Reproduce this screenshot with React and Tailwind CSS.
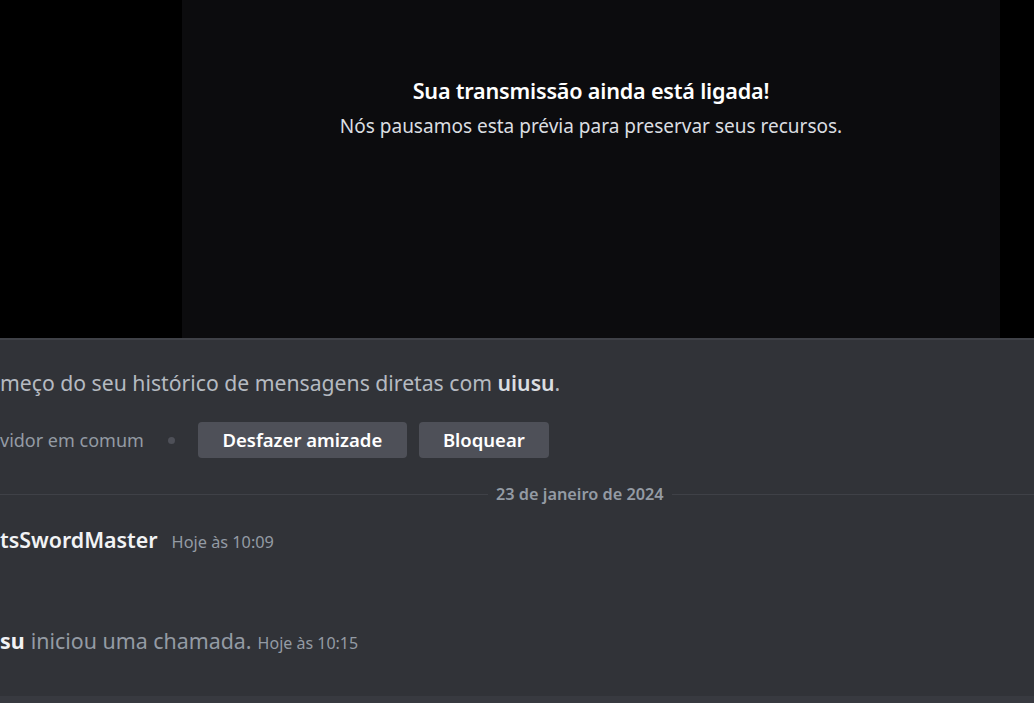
import React from 'react';

const font = { fontFamily: '"Noto Sans", "Liberation Sans", sans-serif' };

const StreamPreview = () => (
    <div className="h-[338px] bg-black flex justify-center">
        <div className="ml-[182px] mr-[34px] flex-1 bg-[#0c0c0e] flex flex-col items-center pt-[76px]">
            <h2 className="text-[21.6px] font-semibold text-white leading-[30px] tracking-[-0.2px] whitespace-nowrap">Sua transmissão ainda está ligada!</h2>
            <p className="text-[19px] text-[#dbdee1] leading-[26px] mt-[7px] whitespace-nowrap">Nós pausamos esta prévia para preservar seus recursos.</p>
        </div>
    </div>
);

const Chat = () => (
    <div className="flex-1 bg-[#313338] border-t-2 border-[#3f4147] flex flex-col overflow-hidden">
        {/* Intro */}
        <p className="mt-[29px] text-[21.2px] leading-[28px] text-[#b5bac1] whitespace-nowrap">
            meço do seu histórico de mensagens diretas com <span className="font-semibold text-[#dbdee1]">uiusu</span>.
        </p>
        <div className="mt-[25px] flex items-center h-9">
            <span className="text-[18px] text-[#949ba4] whitespace-nowrap">vidor em comum</span>
            <span className="ml-[24px] w-[7px] h-[7px] rounded-full bg-[#4e5058]" />
            <button className="ml-[23px] h-9 w-[209px] rounded-[4px] bg-[#4e5058] text-white text-[18.5px] font-semibold">Desfazer amizade</button>
            <button className="ml-[12px] h-9 w-[130px] rounded-[4px] bg-[#4e5058] text-white text-[18.5px] font-semibold">Bloquear</button>
        </div>

        {/* Date divider */}
        <div className="mt-[26px] flex items-center h-5">
            <div className="w-[488px] h-px bg-[#3f4147]" />
            <span className="px-2 text-[16.3px] font-semibold text-[#949ba4] whitespace-nowrap">23 de janeiro de 2024</span>
            <div className="flex-1 h-px bg-[#3f4147]" />
        </div>

        {/* Messages */}
        <div className="mt-[22px] flex items-baseline whitespace-nowrap leading-[28px]">
            <span className="text-[21.4px] font-semibold text-[#f2f3f5]">tsSwordMaster</span>
            <span className="ml-[14px] text-[16.3px] text-[#949ba4]">Hoje às 10:09</span>
        </div>
        <div className="mt-[71px] flex items-baseline whitespace-nowrap leading-[28px]">
            <span className="text-[21.4px] font-bold text-[#f2f3f5]">su</span>
            <span className="ml-[6px] text-[21.4px] text-[#949ba4]">iniciou uma chamada.</span>
            <span className="ml-[6px] text-[16px] text-[#949ba4]">Hoje às 10:15</span>
        </div>
        <div className="flex-1" />
        <div className="h-[7px] bg-[#383a40]" />
    </div>
);

export default function App() {
    return (
        <div className="w-[1034px] h-[703px] flex flex-col overflow-hidden" style={font}>
            <StreamPreview />
            <Chat />
        </div>
    );
}
